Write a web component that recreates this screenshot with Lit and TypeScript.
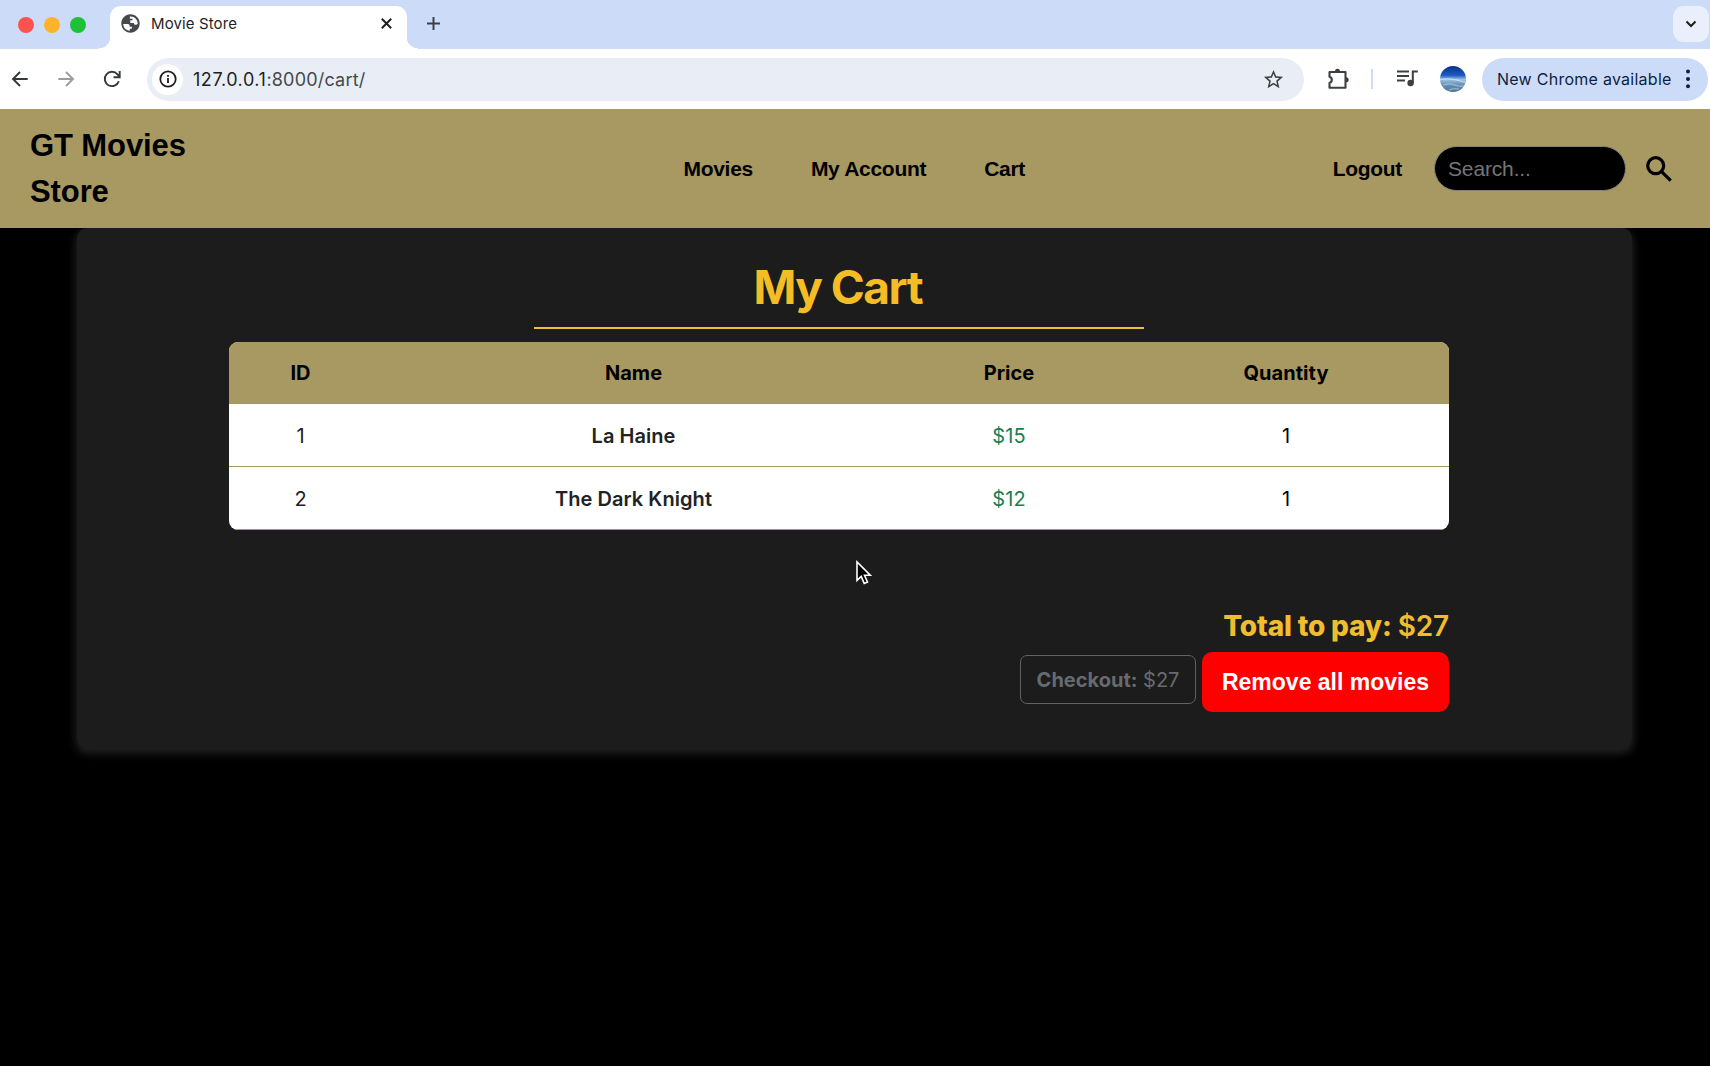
import { LitElement, html, css, svg } from "lit";
import { customElement } from "lit/decorators.js";

interface CartItem {
  id: number;
  name: string;
  price: number;
  quantity: number;
}

const ITEMS: CartItem[] = [
  { id: 1, name: "La Haine", price: 15, quantity: 1 },
  { id: 2, name: "The Dark Knight", price: 12, quantity: 1 },
];

const icon = (cls: string, d: string) =>
  html`<svg class=${cls} viewBox="0 0 24 24" fill="currentColor" aria-hidden="true">${svg`<path d=${d}></path>`}</svg>`;

@customElement("browser-chrome")
class BrowserChrome extends LitElement {
  static styles = css`
    :host { display: block; font-family: Inter, "Liberation Sans", sans-serif; color: #1f1f1f; }
    svg { display: block; flex: none; }
    .strip { box-sizing: border-box; height: 49px; background: #ccdcf8; display: flex; align-items: flex-start; padding-top: 6px; }
    .lights { display: flex; gap: 10px; padding: 11px 13px 0 18px; }
    .light { width: 16px; height: 16px; border-radius: 50%; }
    .red { background: #fd524d; }
    .amber { background: #fdb32b; }
    .green { background: #1ec237; }
    .flare { width: 11px; height: 12px; align-self: flex-end; }
    .flare-l { background: radial-gradient(circle at 0 0, transparent 11px, #fff 11.6px); }
    .flare-r { background: radial-gradient(circle at 100% 0, transparent 11px, #fff 11.6px); }
    .tab { box-sizing: border-box; width: 297px; height: 43px; border-radius: 11px 11px 0 0; background: #fff; display: flex; align-items: center; padding: 0 14px 8px 10px; }
    .globe { width: 21px; height: 21px; color: #45484c; }
    .title { flex: 1; padding-left: 10px; font-size: 15px; letter-spacing: 0.12px; line-height: 20px; }
    .x { width: 13px; height: 13px; }
    .plus { width: 15px; height: 15px; margin: 10px 0 0 8px; color: #3c4043; }
    .grow { flex: 1; }
    .chevron { width: 36px; height: 36px; border-radius: 11px; background: #e9f0fc; display: grid; place-items: center; margin-right: 1px; }
    .chevron svg { width: 12px; height: 12px; }
    .bar { box-sizing: border-box; height: 60px; background: #fff; display: flex; align-items: center; padding: 0 2px 0 9px; }
    .nav { width: 22px; height: 22px; color: #36393c; margin-right: 24px; }
    .dim { color: #9b9c9d; }
    .omni { flex: 1; height: 43px; border-radius: 22px; background: #e9eef6; display: flex; align-items: center; padding: 0 19px 0 5px; }
    .info { width: 31px; height: 31px; border-radius: 50%; background: #fff; display: grid; place-items: center; }
    .info svg { width: 18px; height: 18px; }
    .url { flex: 1; padding-left: 10px; font-size: 18px; letter-spacing: 0.55px; }
    .port { color: #45484d; letter-spacing: 0.2px; }
    .star { width: 23px; height: 23px; color: #3c4043; }
    .puzzle { width: 24px; height: 24px; margin-left: 22px; color: #3c4043; }
    .rule { width: 2px; height: 20px; margin-left: 21px; background: #ccdcf8; }
    .media { width: 24px; height: 24px; margin-left: 22px; color: #3c4043; }
    .avatar { width: 26px; height: 26px; margin-left: 21px; }
    .update { box-sizing: border-box; width: 226px; height: 43px; margin-left: 16px; border-radius: 22px; background: #ccdcf8; color: #0d1f42; display: flex; align-items: center; padding: 0 9px 0 15px; font-size: 16px; letter-spacing: 0.26px; white-space: nowrap; }
    .dots { width: 22px; height: 24px; margin-left: auto; }
  `;

  render() {
    return html`
      <div class="strip">
        <div class="lights">
          <span class="light red"></span><span class="light amber"></span><span class="light green"></span>
        </div>
        <span class="flare flare-l"></span>
        <div class="tab">
          ${icon("globe", "M12 1.5C6.2 1.5 1.5 6.2 1.5 12S6.2 22.5 12 22.5 22.5 17.8 22.5 12 17.8 1.5 12 1.5zM3.700 12.500h5.300c1.200 0 2 .800 2 2v1.200h2.500v2.300h-2.300v2.200C7 20 3.700 16.600 3.700 12.500zM20.200 12.300c-.400.800-1.100 1.200-2 1.200-1.500 0-2.400-.900-2.400-2.200h-4V8.400h2.600V6.700h-3.100V4C16 3.300 20.500 7.400 20.200 12.300z")}
          <span class="title">Movie Store</span>
          <svg class="x" viewBox="0 0 13 13" fill="none" stroke="currentColor" stroke-width="2"><path d="M1.800 1.800 11.200 11.200M11.200 1.800 1.800 11.200"></path></svg>
        </div>
        <span class="flare flare-r"></span>
        <svg class="plus" viewBox="0 0 15 15" fill="none" stroke="currentColor" stroke-width="2"><path d="M7.500 1v13M1 7.500h13"></path></svg>
        <span class="grow"></span>
        <span class="chevron"><svg viewBox="0 0 12 12" fill="none" stroke="currentColor" stroke-width="2"><path d="M1.500 3.500 6 8l4.500-4.500"></path></svg></span>
      </div>
      <div class="bar">
        <svg class="nav" viewBox="0 0 22 22" fill="none" stroke="currentColor" stroke-width="1.900"><path d="M18.700 11H4.500M11 4l-7 7 7 7"></path></svg>
        <svg class="nav dim" viewBox="0 0 22 22" fill="none" stroke="currentColor" stroke-width="1.900"><path d="M3.300 11h14.200M11 4l7 7-7 7"></path></svg>
        <svg class="nav" viewBox="0 0 22 22" fill="none" stroke="currentColor" stroke-width="1.900"><path d="M17.800 13.200A7.200 7.200 0 1 1 16.500 6.300L18.500 8.500M18.700 3v6.300h-6.200"></path></svg>
        <div class="omni">
          <span class="info"><svg viewBox="0 0 18 18" fill="none" stroke="currentColor" stroke-width="1.800"><circle cx="9" cy="9" r="7.700"></circle><path d="M9 8v5M9 5v1.800"></path></svg></span>
          <span class="url">127.0.0.1<span class="port">:8000/cart/</span></span>
          ${icon("star", "M22 9.240l-7.190-.620L12 2 9.190 8.630 2 9.240l5.460 4.730L5.820 21 12 17.270 18.180 21l-1.630-7.030L22 9.240zM12 15.400l-3.760 2.270 1-4.280-3.320-2.880 4.380-.380L12 6.100l1.710 4.040 4.380.380-3.320 2.880 1 4.280L12 15.400z")}
        </div>
        <svg class="puzzle" viewBox="0 0 24 24" fill="none" stroke="currentColor" stroke-width="2.100"><path d="M3.500 5h16v15.700h-16v-4.700a3.300 3.300 0 0 0 0-6.300z" stroke-linejoin="round"></path><path d="M9 4.500a2.500 2.700 0 0 1 5 0zM20 10.300a2.700 2.500 0 0 1 0 5z" fill="currentColor" stroke="none"></path></svg>
        <span class="rule"></span>
        <svg class="media" viewBox="0 0 24 24" fill="none" stroke="currentColor" stroke-width="2"><path d="M2 4.500h12M2 9h12M2 13.500h8M17.800 16V4.500h5"></path><circle cx="15.600" cy="16" r="3.200" fill="currentColor" stroke="none"></circle></svg>
        <svg class="avatar" viewBox="0 0 26 26">
          <defs>
            <clipPath id="disc"><circle cx="13" cy="13" r="13"></circle></clipPath>
            <linearGradient id="sky" x1="0" y1="0" x2="0" y2="1">
              <stop offset="0" stop-color="#0b2f86"></stop><stop offset=".36" stop-color="#1d5cc4"></stop><stop offset=".52" stop-color="#a0c2e2"></stop><stop offset=".7" stop-color="#6a93b8"></stop><stop offset="1" stop-color="#4a7397"></stop>
            </linearGradient>
          </defs>
          <g clip-path="url(#disc)">
            <path fill="url(#sky)" d="M0 0h26v26H0z"></path>
            <path fill="none" stroke="#d7e8f5" stroke-width="1.300" d="M0 13.500Q13 11.500 26 17" opacity=".7"></path>
            <path fill="none" stroke="#c2d8e8" stroke-width="1.500" d="M3 19q7-2 12 0t9 1M9 24q5-2 10-1" opacity=".5"></path>
          </g>
        </svg>
        <div class="update">
          <span>New Chrome available</span>
          <svg class="dots" viewBox="0 0 22 24" fill="currentColor"><circle cx="11" cy="4.500" r="2"></circle><circle cx="11" cy="12" r="2"></circle><circle cx="11" cy="19.200" r="2"></circle></svg>
        </div>
      </div>
    `;
  }
}

@customElement("store-header")
class StoreHeader extends LitElement {
  static styles = css`
    :host { display: grid; grid-template-columns: 652px 1fr auto; align-items: center; box-sizing: border-box; height: 119px; background: #a79961; color: #000; font-family: "Liberation Sans", Arial, sans-serif; font-weight: 700; position: relative; }
    .brand { width: 180px; padding-left: 30px; font-size: 31px; letter-spacing: -0.1px; line-height: 46px; }
    .links { display: flex; gap: 58px; padding-left: 31.500px; font-size: 21px; letter-spacing: -0.3px; line-height: 30px; }
    .tools { display: flex; align-items: center; padding-right: 36px; }
    .logout { font-size: 21px; letter-spacing: -0.33px; margin-right: 32px; }
    .search { box-sizing: border-box; width: 192px; height: 45px; border: 1px solid #85837a; border-radius: 23px; background: #000; color: #757575; font: 400 21px/43px "Liberation Sans", Arial, sans-serif; letter-spacing: -0.15px; padding: 0 13px; }
    .glass { width: 30px; height: 30px; margin-left: 18px; display: block; }
  `;

  render() {
    return html`
      <div class="brand">GT Movies Store</div>
      <nav class="links"><span>Movies</span><span>My Account</span><span>Cart</span></nav>
      <div class="tools">
        <span class="logout">Logout</span>
        <div class="search">Search...</div>
        <svg class="glass" viewBox="0 0 30 30" fill="none" stroke="currentColor" stroke-width="3.200"><circle cx="11.700" cy="11.700" r="8"></circle><path d="M17.600 17.600 26.700 26.700"></path></svg>
      </div>
    `;
  }
}

@customElement("cart-panel")
class CartPanel extends LitElement {
  static styles = css`
    :host { display: block; font-family: Inter, "Liberation Sans", sans-serif; }
    .panel { box-sizing: border-box; width: 1555px; height: 520px; margin: 0 0 0 77px; padding: 34px 183px 0 151.500px; border-radius: 10px; background: #1c1c1c; box-shadow: 0 4px 10px 1px #242424; }
    .heading { box-sizing: border-box; width: 610px; height: 67px; margin: 0 auto; padding-right: 2px; border-bottom: 2px solid #f0c03a; color: #f4bd26; font-size: 46px; font-weight: 700; letter-spacing: -1.500px; line-height: 51px; text-align: center; }
    .table { margin-top: 13px; border-radius: 9px; overflow: hidden; background: #fff; color: #212224; font-size: 20px; letter-spacing: 0.050px; text-align: center; }
    .row { display: grid; grid-template-columns: 144px 522px 229px 325px; height: 62px; line-height: 64px; border-bottom: 1px solid #a79961; }
    .head { background: #a79961; color: #000; font-weight: 700; height: 61px; line-height: 63px; }
    .name { font-weight: 600; }
    .price { color: #1b7e52; }
    .qty { color: #000; }
    .total { margin-top: 76px; height: 40px; color: #f0bd2e; font-size: 28px; font-weight: 800; letter-spacing: -0.160px; line-height: 40px; text-align: right; }
    .sum { font-weight: 600; }
    .actions { display: flex; justify-content: flex-end; gap: 6px; margin-top: 6px; }
    .checkout { box-sizing: border-box; width: 176px; height: 49px; margin-top: 3px; border: 1.500px solid #5f6366; border-radius: 7px; color: #676b6f; font-size: 20px; line-height: 48px; text-align: center; white-space: nowrap; }
    .remove { width: 247px; height: 60px; border-radius: 10px; background: #fe0000; color: #fff; font: 700 23px/60px "Liberation Sans", Arial, sans-serif; text-align: center; }
  `;

  render() {
    const total = ITEMS.reduce((sum, item) => sum + item.price * item.quantity, 0);
    return html`
      <section class="panel">
        <div class="heading">My Cart</div>
        <div class="table">
          <div class="row head"><span>ID</span><span>Name</span><span>Price</span><span>Quantity</span></div>
          ${ITEMS.map(
            (item) => html`<div class="row">
              <span>${item.id}</span><span class="name">${item.name}</span><span class="price">$${item.price}</span><span class="qty">${item.quantity}</span>
            </div>`
          )}
        </div>
        <div class="total">Total to pay: <span class="sum">$${total}</span></div>
        <div class="actions">
          <div class="checkout"><b>Checkout:</b> $${total}</div>
          <div class="remove">Remove all movies</div>
        </div>
      </section>
    `;
  }
}

@customElement("app-root")
class AppRoot extends LitElement {
  static styles = css`
    :host { display: block; position: relative; width: 1710px; height: 1066px; overflow: hidden; background: #000; }
    .pointer { position: absolute; left: 855px; top: 560px; width: 17px; height: 26px; }
  `;

  render() {
    return html`
      <browser-chrome></browser-chrome>
      <store-header></store-header>
      <cart-panel></cart-panel>
      <svg class="pointer" viewBox="0 0 17 26"><path d="M2 2v18.300l4.200-3.900 3 7 3.300-1.400-3-6.800h5.700z" fill="#000" stroke="#fff" stroke-width="1.600"></path></svg>
    `;
  }
}
